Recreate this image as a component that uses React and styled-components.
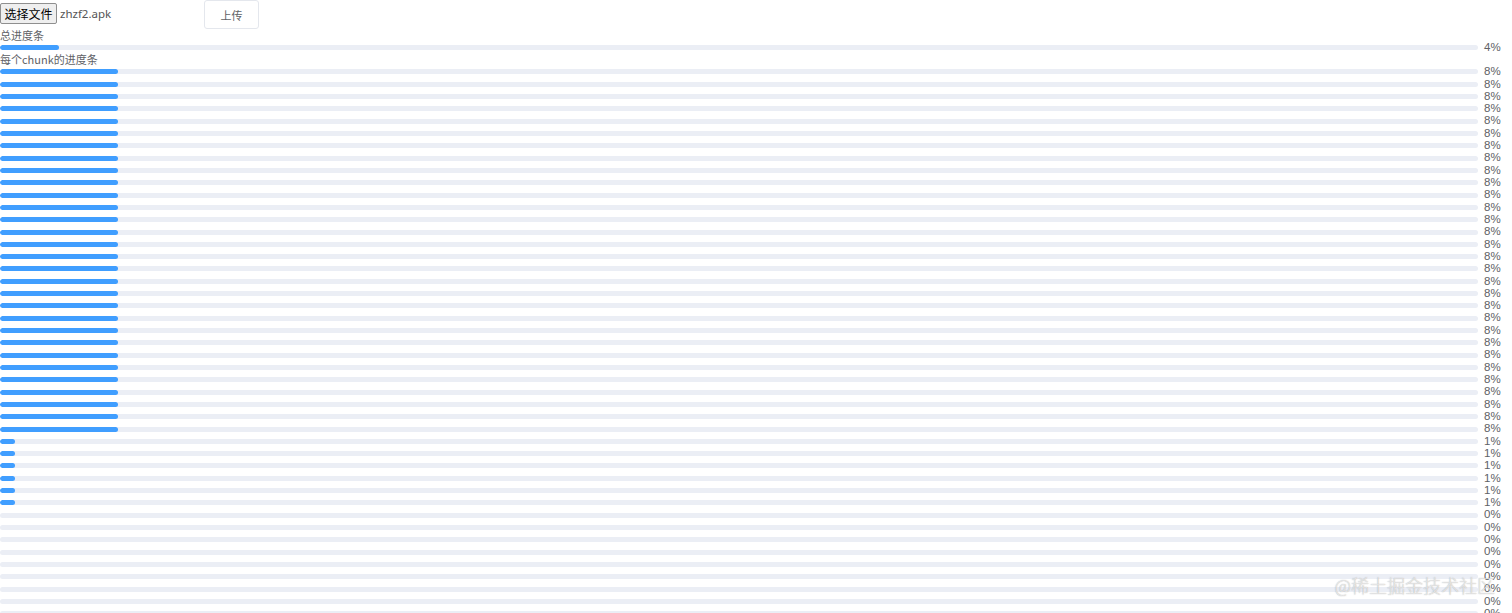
import styled, { createGlobalStyle } from 'styled-components';

const GlobalStyle = createGlobalStyle`
    html, body {
        margin: 0;
        padding: 0;
        overflow: hidden;
        background: #fff;
    }
    body {
        font-family: "Noto Sans", "Noto Sans CJK SC", sans-serif;
        color: #606266;
    }
`;

const chunks = [
    ...Array(30).fill(8),
    ...Array(6).fill(1),
    ...Array(10).fill(0),
];

const Progress = ({ percent }) => (
    <Row>
        <Track>
            <Fill style={{ width: `${percent}%` }} />
        </Track>
        <Percent>{percent}%</Percent>
    </Row>
);

const App = () => {
    return (
        <Page>
            <GlobalStyle />
            <Toolbar>
                <FilePicker>
                    <ChooseButton>选择文件</ChooseButton>
                    <FileName>zhzf2.apk</FileName>
                </FilePicker>
                <UploadButton>上传</UploadButton>
            </Toolbar>
            <Label>总进度条</Label>
            <Progress percent={4} />
            <Label $tight>每个chunk的进度条</Label>
            {chunks.map((p, i) => (
                <Progress key={i} percent={p} />
            ))}
            <Watermark>@稀土掘金技术社区</Watermark>
        </Page>
    );
};

const Page = styled.div`
    position: relative;
    height: 613px;
    overflow: hidden;
`;

const Toolbar = styled.div`
    display: flex;
    align-items: flex-start;
    height: 29px;
`;

const FilePicker = styled.div`
    display: flex;
    align-items: center;
    gap: 3px;
    width: 204px;
    padding-top: 3px;
`;

const ChooseButton = styled.button`
    height: 21px;
    width: 57px;
    padding: 0;
    font-family: "Noto Sans CJK SC", sans-serif;
    font-size: 12px;
    color: #000;
    background: #efefef;
    border: 1px solid #8f8f8f;
    border-radius: 2px;
`;

const FileName = styled.span`
    font-size: 11.5px;
    color: #555;
`;

const UploadButton = styled.button`
    width: 55px;
    height: 29px;
    padding: 0;
    background: #fff;
    border: 1px solid #e4e7ed;
    border-radius: 3px;
    font-family: "Noto Sans CJK SC", sans-serif;
    font-size: 11px;
    color: #606266;
`;

const Label = styled.div`
    font-family: "Noto Sans CJK SC", sans-serif;
    font-size: 11px;
    line-height: ${props => (props.$tight ? '11.7px' : '12.8px')};
    color: #606266;
`;

const Row = styled.div`
    display: flex;
    align-items: center;
    height: 12.32px;
`;

const Track = styled.div`
    flex: 1;
    height: 5px;
    background: #ebeef5;
    border-radius: 100px;
    overflow: hidden;
`;

const Fill = styled.div`
    height: 100%;
    background: #409eff;
    border-radius: 100px;
`;

const Percent = styled.span`
    width: 28px;
    margin-left: 6px;
    font-family: "Liberation Sans", sans-serif;
    font-size: 11.5px;
    line-height: 1;
    color: #606266;
`;

const Watermark = styled.div`
    position: absolute;
    right: 17px;
    bottom: 19px;
    font-family: "Noto Sans CJK SC", sans-serif;
    font-size: 18px;
    font-weight: 300;
    line-height: 1;
    color: rgba(255, 255, 255, 0.7);
    text-shadow: 0 0 1px rgba(110, 110, 110, 0.7);
`;

export default App;
